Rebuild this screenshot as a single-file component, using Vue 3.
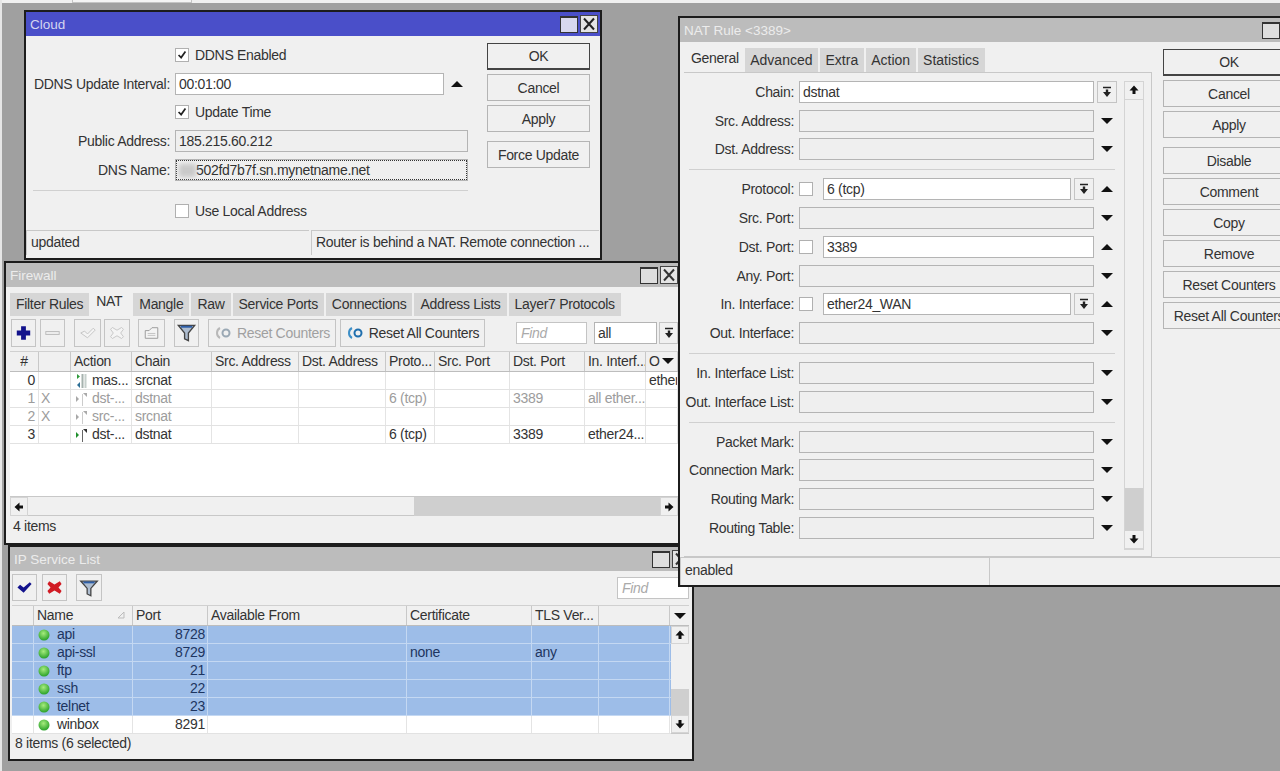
<script setup>
const cloudBtns = [
  { t: 'OK', cls: 'def' }, { t: 'Cancel' }, { t: 'Apply' }, { t: 'Force Update', cls: 'gap' }
]
const natBtns = [
  { t: 'OK', cls: 'def' }, { t: 'Cancel' }, { t: 'Apply' }, { t: 'Disable', cls: 'gap' },
  { t: 'Comment' }, { t: 'Copy' }, { t: 'Remove' }, { t: 'Reset Counters' }, { t: 'Reset All Counters' }
]
const fwTabs = ['Filter Rules', 'NAT', 'Mangle', 'Raw', 'Service Ports', 'Connections', 'Address Lists', 'Layer7 Protocols']
const natTabs = ['General', 'Advanced', 'Extra', 'Action', 'Statistics']
const natRows = [
  { l: 'Chain:', v: 'dstnat', on: true, drop: true, caret: 'none' },
  { l: 'Src. Address:' }, { l: 'Dst. Address:' }, { sep: 1 },
  { l: 'Protocol:', v: '6 (tcp)', on: true, chk: true, drop: true, caret: 'up' },
  { l: 'Src. Port:' },
  { l: 'Dst. Port:', v: '3389', on: true, chk: true, caret: 'up' },
  { l: 'Any. Port:' },
  { l: 'In. Interface:', v: 'ether24_WAN', on: true, chk: true, drop: true, caret: 'up' },
  { l: 'Out. Interface:' }, { sep: 2 },
  { l: 'In. Interface List:' }, { l: 'Out. Interface List:' }, { sep: 3 },
  { l: 'Packet Mark:' }, { l: 'Connection Mark:' }, { l: 'Routing Mark:' }, { l: 'Routing Table:' }
]
const fwHead = ['#', '', 'Action', 'Chain', 'Src. Address', 'Dst. Address', 'Proto...', 'Src. Port', 'Dst. Port', 'In. Interf...', 'O']
const fwRows = [
  { n: '0', x: '', ic: 'mas', a: 'mas...', ch: 'srcnat', p: '', d: '', i: '', o: 'ether' },
  { n: '1', x: 'X', ic: 'nat', a: 'dst-...', ch: 'dstnat', p: '6 (tcp)', d: '3389', i: 'all ether...', o: '', off: true },
  { n: '2', x: 'X', ic: 'nat', a: 'src-...', ch: 'srcnat', p: '', d: '', i: '', o: '', off: true },
  { n: '3', x: '', ic: 'nat', a: 'dst-...', ch: 'dstnat', p: '6 (tcp)', d: '3389', i: 'ether24...', o: '' }
]
const ipHead = ['', 'Name', 'Port', 'Available From', 'Certificate', 'TLS Ver...', '']
const ipRows = [
  { n: 'api', p: '8728', s: true }, { n: 'api-ssl', p: '8729', c: 'none', t: 'any', s: true },
  { n: 'ftp', p: '21', s: true }, { n: 'ssh', p: '22', s: true }, { n: 'telnet', p: '23', s: true },
  { n: 'winbox', p: '8291' }
]
</script>

<template>
  <div class="desktop">
    <div class="top-strip"><span class="top-box"></span></div>
    <div class="left-strip"></div>

    <!-- Cloud -->
    <section class="win cloud">
      <header class="title active">
        <span>Cloud</span>
        <span class="tbtns">
          <span class="tb-max"></span>
          <svg class="tb-x" viewBox="0 0 18 18"><path d="M4 3.500 14 14.500M14 3.500 4 14.500" stroke="#222" stroke-width="2" fill="none" /></svg>
        </span>
      </header>
      <div class="cloud-body">
        <div class="cloud-form">
          <div class="crow"><span class="flabel"></span><span class="check on"><svg viewBox="0 0 14 14"><path d="M3 7l3 3 5-7" stroke="#222" stroke-width="2" fill="none" /></svg></span><span class="clabel">DDNS Enabled</span></div>
          <div class="crow"><span class="flabel">DDNS Update Interval:</span><span class="field on w-interval">00:01:00</span><span class="caret-cell"><i class="caret up"></i></span></div>
          <div class="crow"><span class="flabel"></span><span class="check on"><svg viewBox="0 0 14 14"><path d="M3 7l3 3 5-7" stroke="#222" stroke-width="2" fill="none" /></svg></span><span class="clabel">Update Time</span></div>
          <div class="crow"><span class="flabel">Public Address:</span><span class="field w-wide">185.215.60.212</span></div>
          <div class="crow"><span class="flabel">DNS Name:</span><span class="field w-wide focus"><span class="smudge"></span>502fd7b7f.sn.mynetname.net</span></div>
          <div class="csep"></div>
          <div class="crow"><span class="flabel"></span><span class="check"></span><span class="clabel">Use Local Address</span></div>
        </div>
        <div class="cloud-btns">
          <button v-for="b in cloudBtns" :key="b.t" class="btn" :class="b.cls">{{ b.t }}</button>
        </div>
      </div>
      <footer class="status">
        <span class="scell c1">updated</span>
        <span class="scell c2">Router is behind a NAT. Remote connection ...</span>
      </footer>
    </section>

    <!-- Firewall -->
    <section class="win firewall">
      <header class="title">
        <span>Firewall</span>
        <span class="tbtns">
          <span class="tb-max"></span>
          <svg class="tb-x" viewBox="0 0 18 18"><path d="M4 3.500 14 14.500M14 3.500 4 14.500" stroke="#333" stroke-width="2" fill="none" /></svg>
        </span>
      </header>
      <nav class="tabs fw-tabs">
        <span v-for="t in fwTabs" :key="t" class="tab" :class="{ cur: t === 'NAT' }">{{ t }}</span>
      </nav>
      <div class="toolbar fw-bar">
        <span class="tool t-plus"><svg viewBox="0 0 24 26"><path d="M9.500 6h5v4.500H19v5h-4.500V20h-5v-4.500H5v-5h4.500z" fill="#12128c" /></svg></span>
        <span class="tool t-minus"><svg viewBox="0 0 24 26"><rect x="5" y="11.500" width="14" height="3" fill="#eee" stroke="#bbb" /></svg></span>
        <span class="tool t-check"><svg viewBox="0 0 26 26"><path d="M6 13l4-2 3 3 6-6 2 2-8 8z" fill="#f4f4f4" stroke="#c4c4c4" /></svg></span>
        <span class="tool t-x"><svg viewBox="0 0 26 26"><path d="M8 7l5 3 5-3 2 2-3 4 3 4-2 2-5-3-5 3-2-2 3-4-3-4z" fill="#f4f4f4" stroke="#c4c4c4" /></svg></span>
        <span class="tool t-note"><svg viewBox="0 0 26 26"><path d="M6.500 10.500h4l3-3h6v11h-13z" fill="#f4f4f4" stroke="#9a9a9a" /><path d="M9 13.500h8M9 15.500h8" stroke="#c4c4c4" /></svg></span>
        <span class="tool t-filter"><svg viewBox="0 0 24 26"><path d="M3.500 5h17l-6.500 8v8l-4-2v-6z" fill="#aebdd0" stroke="#444" stroke-width="1.400" /><path d="M6 6.500h12" stroke="#2f5fa8" stroke-width="2" /></svg></span>
        <span class="tool wide t-reset dim">
          <svg viewBox="0 0 20 14"><path d="M6 2C2 4 2 10 6 12" stroke="#b8b8b8" stroke-width="2" fill="none" /><circle cx="12" cy="7" r="3.500" fill="none" stroke="#9aa8b4" stroke-width="2" /></svg>
          Reset Counters
        </span>
        <span class="tool wide t-resetall">
          <svg viewBox="0 0 20 14"><path d="M6 2C2 4 2 10 6 12" stroke="#3d8fc7" stroke-width="2" fill="none" /><circle cx="12" cy="7" r="3.500" fill="none" stroke="#1f6fae" stroke-width="2" /></svg>
          Reset All Counters
        </span>
        <span class="find fw-find">Find</span>
        <span class="field on fw-all">all</span>
        <span class="dropbtn fw-drop"><svg viewBox="0 0 12 12"><path d="M2 1.500h8" stroke="#222" stroke-width="1.500" /><path d="M4.800 3.500h2.400v2.500H10L6 11 2 6h2.800z" fill="#222" /></svg></span>
      </div>
      <div class="grid-wrap fw-grid">
        <div class="grow head fw-cols">
          <span v-for="(h, i) in fwHead" :key="i" class="cell" :class="{ ctr: i === 0 }">{{ h }}</span>
          <i class="caret down head-caret"></i>
        </div>
        <div v-for="r in fwRows" :key="r.n" class="grow fw-cols" :class="{ off: r.off }">
          <span class="cell num">{{ r.n }}</span>
          <span class="cell xcell">{{ r.x }}</span>
          <span class="cell act">
            <svg v-if="r.ic === 'mas'" viewBox="0 0 14 14"><path d="M3 0v5l3-2.500z" fill="#2f9a3a" /><path d="M6 8v6l-3-3z" fill="#2d6f96" /><rect x="7.500" y="0" width="2" height="14" fill="#a6b2ae" /><rect x="10.500" y="0" width="2" height="14" fill="#c6cfcc" /></svg>
            <svg v-else viewBox="0 0 14 14"><path d="M2 4v6l3-3z" :fill="r.off ? '#a8a8a8' : '#1f8f2c'" /><path d="M8.500 14V2" :stroke="r.off ? '#ccc' : '#666'" /><path d="M9 1h4v4z" :fill="r.off ? '#aaa' : '#333'" /></svg>
            {{ r.a }}
          </span>
          <span class="cell">{{ r.ch }}</span>
          <span class="cell"></span>
          <span class="cell"></span>
          <span class="cell">{{ r.p }}</span>
          <span class="cell"></span>
          <span class="cell">{{ r.d }}</span>
          <span class="cell">{{ r.i }}</span>
          <span class="cell">{{ r.o }}</span>
        </div>
        <div class="grid-fill"></div>
      </div>
      <div class="hscroll">
        <span class="sbtn"><svg viewBox="0 0 12 12"><path d="M6.500 1.500v3H10v3H6.500v3L1.500 6z" fill="#111" /></svg></span>
        <span class="hthumb"></span>
        <span class="htrack"></span>
        <span class="sbtn"><svg viewBox="0 0 12 12"><path d="M5.500 1.500v3H2v3h3.500v3l5-4.500z" fill="#111" /></svg></span>
      </div>
      <footer class="status fw-status"><span class="scell full">4 items</span></footer>
    </section>

    <!-- IP Service List -->
    <section class="win iplist">
      <header class="title">
        <span>IP Service List</span>
        <span class="tbtns">
          <span class="tb-max"></span>
          <svg class="tb-x" viewBox="0 0 18 18"><path d="M4 3.500 14 14.500M14 3.500 4 14.500" stroke="#333" stroke-width="2" fill="none" /></svg>
        </span>
      </header>
      <div class="toolbar ip-bar">
        <span class="tool t-ipc"><svg viewBox="0 0 26 26"><path d="M5 13l3-3 4 3 7-6 2 2-9 10z" fill="#12128c" /></svg></span>
        <span class="tool t-ipx"><svg viewBox="0 0 26 26"><path d="M7 6l6 3.500L19 6l2 3-3.500 4L21 17l-2 3-6-3.500L7 20l-2-3 3.500-4L5 9z" fill="#d11b24" /></svg></span>
        <span class="tool t-ipf"><svg viewBox="0 0 26 26"><path d="M4 6h18l-7 8v8l-4-2v-6z" fill="#aebdd0" stroke="#444" stroke-width="1.400" /><path d="M7 7.500h12" stroke="#2f5fa8" stroke-width="2" /></svg></span>
        <span class="find ip-find">Find</span>
      </div>
      <div class="ip-table">
        <div class="ip-main">
          <div class="grow head ip-cols">
            <span v-for="(h, i) in ipHead" :key="i" class="cell">
              {{ h }}
              <svg v-if="h === 'Name'" class="sort" viewBox="0 0 10 10"><path d="M7 2v6H1z" fill="none" stroke="#bbb" /></svg>
            </span>
          </div>
          <div v-for="r in ipRows" :key="r.n" class="grow ip-cols" :class="{ sel: r.s }">
            <span class="cell"></span>
            <span class="cell act ipname">
              <svg viewBox="0 0 12 12"><defs><radialGradient id="led" cx=".45" cy=".35" r=".7"><stop offset="0" stop-color="#a7ec7e" /><stop offset="1" stop-color="#1f9b22" /></radialGradient></defs><circle cx="6" cy="6" r="5.500" fill="url(#led)" /></svg>
              {{ r.n }}
            </span>
            <span class="cell num port">{{ r.p }}</span>
            <span class="cell"></span>
            <span class="cell">{{ r.c }}</span>
            <span class="cell">{{ r.t }}</span>
            <span class="cell"></span>
          </div>
        </div>
        <div class="ip-scroll">
          <span class="vcorner"><i class="caret down"></i></span>
          <span class="sbtn"><svg viewBox="0 0 12 12"><path d="M1.500 6.500 6 1.500l4.500 5h-3V10h-3V6.500z" fill="#111" /></svg></span>
          <span class="vtrack"></span>
          <span class="vthumb"></span>
          <span class="sbtn"><svg viewBox="0 0 12 12"><path d="M1.500 5.500 6 10.500l4.500-5h-3V2h-3v3.500z" fill="#111" /></svg></span>
        </div>
      </div>
      <footer class="status ip-status"><span class="scell full">8 items (6 selected)</span></footer>
    </section>

    <!-- NAT Rule -->
    <section class="win natrule">
      <header class="title">
        <span>NAT Rule &lt;3389&gt;</span>
        <span class="tbtns"><span class="tb-max"></span></span>
      </header>
      <div class="nat-body">
        <div class="nat-main">
          <nav class="tabs nat-tabs">
            <span v-for="t in natTabs" :key="t" class="tab" :class="{ cur: t === 'General' }">{{ t }}</span>
          </nav>
          <div class="nat-panel">
            <div class="nat-form">
              <template v-for="r in natRows" :key="r.l || r.sep">
                <div v-if="r.sep" class="nsep" :class="'s' + r.sep"></div>
                <div v-else class="nrow">
                  <span class="nlabel">{{ r.l }}</span>
                  <span v-if="r.chk" class="check"></span>
                  <span class="field grow-f" :class="{ on: r.on }">{{ r.v }}</span>
                  <span v-if="r.drop" class="dropbtn"><svg viewBox="0 0 12 12"><path d="M2 1.500h8" stroke="#222" stroke-width="1.500" /><path d="M4.800 3.500h2.400v2.500H10L6 11 2 6h2.800z" fill="#222" /></svg></span>
                  <span class="caret-cell" :class="{ none: r.caret === 'none' }"><i v-if="r.caret !== 'none'" class="caret" :class="r.caret || 'down'"></i></span>
                </div>
              </template>
            </div>
            <div class="nat-scroll">
              <span class="sbtn"><svg viewBox="0 0 12 12"><path d="M1.500 6.500 6 1.500l4.500 5h-3V10h-3V6.500z" fill="#111" /></svg></span>
              <span class="vtrack"></span>
              <span class="vthumb"></span>
              <span class="sbtn"><svg viewBox="0 0 12 12"><path d="M1.500 5.500 6 10.500l4.500-5h-3V2h-3v3.500z" fill="#111" /></svg></span>
            </div>
          </div>
        </div>
        <div class="nat-btns">
          <button v-for="b in natBtns" :key="b.t" class="btn" :class="b.cls">{{ b.t }}</button>
        </div>
      </div>
      <footer class="status nat-status">
        <span class="scell n1">enabled</span>
        <span class="scell n2"></span>
      </footer>
    </section>
  </div>
</template>

<style>
html, body { margin: 0; background: #a0a0a0; }
</style>

<style scoped>
.desktop {
  position: relative;
  width: 1280px;
  height: 771px;
  overflow: hidden;
  background: #a0a0a0;
  font-family: "Liberation Sans", Arial, sans-serif;
  font-size: 14px;
  letter-spacing: -0.3px;
  color: #333;
}
.top-strip { height: 3px; background: #f0f0f0; position: relative; }
.top-box { position: absolute; left: 72px; top: -1px; width: 118px; height: 2px; border: 1px solid #c4c4c4; background: #f4f4f4; }
.left-strip { position: absolute; left: 0; top: 0; width: 2px; height: 771px; background: #e6e6e6; }

.win {
  position: absolute;
  box-sizing: border-box;
  border: 2px solid #1c1c1c;
  background: #f0f0f0;
  display: flex;
  flex-direction: column;
}
.cloud { left: 24px; top: 10px; width: 578px; height: 250px; }
.firewall { left: 4px; top: 261px; width: 678px; height: 284px; }
.iplist { left: 8px; top: 545px; width: 686px; height: 216px; }
.natrule { left: 678px; top: 16px; width: 640px; height: 571px; }

.title {
  height: 24px;
  flex: none;
  background: #bcbcbc;
  color: #ececec;
  display: flex;
  align-items: center;
  justify-content: space-between;
  padding-left: 4px;
  font-size: 13.500px;
  letter-spacing: 0;
}
.title.active { background: #4a4fc9; color: #d5d6f0; }
.tbtns { display: flex; gap: 2px; margin-right: 2px; align-items: center; }
.tb-max { width: 16px; height: 14px; border: 1px solid #333; border-top-width: 2px; box-sizing: content-box; background: #dedede; }
.active .tb-max { background: #d7d7ee; }
.tb-x { width: 18px; height: 18px; background: #e4e4e4; outline: 1px solid #444; outline-offset: -1px; }
.natrule .tbtns { margin-right: 36px; }

.flabel { width: 144px; text-align: right; margin-right: 5px; white-space: nowrap; flex: none; }
.field {
  box-sizing: border-box;
  height: 22px;
  border: 1px solid #b4b4b4;
  background: #efefef;
  padding-left: 3px;
  line-height: 20px;
  white-space: nowrap;
  overflow: hidden;
  display: block;
  position: relative;
}
.field.on { background: #fff; }
.check {
  flex: none;
  box-sizing: border-box;
  width: 14px;
  height: 14px;
  border: 1px solid #b0b0b0;
  background: #fff;
  display: block;
}
.check svg { display: block; width: 12px; height: 12px; }
.clabel { margin-left: 6px; }

.cloud-body { display: flex; height: 193px; flex: none; }
.cloud-form { width: 461px; padding-top: 4.500px; flex: none; }
.crow { display: flex; align-items: center; height: 28.800px; }
.w-interval { width: 269px; }
.w-wide { width: 293px; }
.focus { outline: 1px dotted #333; outline-offset: -2px; }
.smudge { display: inline-block; width: 17px; height: 13px; background: #c9c9c9; filter: blur(2px); vertical-align: -2px; }
.csep { height: 12px; margin: 0 0 0 7px; width: 435px; position: relative; }
.csep::after, .nsep::after { content: ""; position: absolute; left: 0; right: 0; top: 50%; border-top: 1px solid #d0d0d0; }
.caret-cell { flex: none; width: 26px; display: flex; justify-content: center; align-items: center; }
.caret-cell.none { width: 3px; }
.caret { display: block; width: 0; height: 0; border-left: 6px solid transparent; border-right: 6px solid transparent; }
.caret.up { border-bottom: 6px solid #111; }
.caret.down { border-top: 6px solid #111; }

.cloud-btns { padding: 7px 0 0; width: 103px; flex: none; }
.btn {
  display: block;
  box-sizing: border-box;
  width: 100%;
  height: 27px;
  margin-bottom: 4px;
  border: 1px solid #b4b4b4;
  background: #f0f0f0;
  font: inherit;
  letter-spacing: inherit;
  color: #333;
  padding: 0;
  white-space: nowrap;
  overflow: hidden;
}
.btn.def { border-color: #444; border-bottom-width: 2px; }
.btn.gap { margin-top: 9px; }

.status { flex: none; display: flex; height: 26px; padding: 0 3px 0 0; box-sizing: border-box; }
.scell {
  box-sizing: border-box;
  border-top: 1px solid #c8c8c8;
  border-left: 1px solid #c8c8c8;
  padding-left: 4px;
  line-height: 23px;
  white-space: nowrap;
  overflow: hidden;
  flex: none;
}
.c1 { width: 283px; margin-right: 2px; }
.c2 { width: 288px; }
.cloud .status { height: 25px; margin-top: 1px; }

.tabs { display: flex; gap: 2px; height: 25px; flex: none; align-items: flex-end; }
.tab {
  height: 23px;
  line-height: 22px;
  background: #d6d6d6;
  white-space: nowrap;
}
.tab.cur { height: 25px; line-height: 20px; background: #f0f0f0; }
.fw-tabs { margin: 4px 0 0 4px; }
.fw-tabs .tab { padding: 0 6px; }
.fw-tabs .tab.cur { padding: 0 9px 0 5px; }

.toolbar { display: flex; height: 28px; flex: none; align-items: stretch; }
.fw-bar { margin: 3px 0 0 5px; }
.tool {
  box-sizing: border-box;
  border: 1px solid #c4c4c4;
  background: #f0f0f0;
  display: flex;
  align-items: center;
  justify-content: center;
  flex: none;
  margin-right: 4px;
}
.tool svg { display: block; width: 100%; height: 100%; }
.tool.wide { gap: 3px; white-space: nowrap; }
.tool.wide svg { width: 20px; height: 14px; flex: none; }
.t-plus { width: 25px; }
.t-minus { width: 25px; margin-right: 9px; }
.t-check { width: 27px; margin-right: 3px; }
.t-x { width: 26px; margin-right: 8px; }
.t-note { width: 27px; margin-right: 9px; }
.t-filter { width: 25px; margin-right: 9px; }
.t-reset { width: 128px; }
.t-resetall { width: 145px; margin-right: 31px; }
.dim { color: #a0a0a0; }
.find {
  box-sizing: border-box;
  height: 22px;
  border: 1px solid #c4c4c4;
  background: #fff;
  color: #aaa;
  font-style: italic;
  padding-left: 4px;
  line-height: 20px;
  flex: none;
  align-self: center;
}
.fw-find { width: 71px; margin-right: 7px; }
.fw-all { width: 63px; align-self: center; margin-right: 2px; flex: none; }
.dropbtn {
  box-sizing: border-box;
  flex: none;
  width: 20px;
  height: 22px;
  margin-left: 3px;
  border: 1px solid #c4c4c4;
  background: #f0f0f0;
  display: flex;
  align-items: center;
  justify-content: center;
}
.dropbtn svg { width: 12px; height: 12px; }
.fw-drop { align-self: center; width: 19px; margin-left: 0; }

.grid-wrap { flex: none; margin: 4px 0 0 4px; background: #fff; }
.fw-grid { width: 668px; height: 145px; display: flex; flex-direction: column; border-bottom: 1px solid #c8c8c8; }
.grid-fill { flex: 1; }
.grow { display: grid; height: 18px; flex: none; background: #fff; position: relative; box-sizing: border-box; border-bottom: 1px solid #e2e2e2; line-height: 17px; }
.fw-cols { grid-template-columns: 29px 32px 61px 80px 87px 87px 49px 75px 75px 61px 32px; }
.ip-cols { grid-template-columns: 22px 99px 75px 199px 125px 67px 71px; }
.grow.head { height: 21px; background: #f0f0f0; border-bottom: 1px solid #bdbdbd; border-top: 1px solid #d0d0d0; line-height: 19px; }
.cell {
  box-sizing: border-box;
  border-right: 1px solid #e4e4e4;
  padding-left: 3px;
  overflow: hidden;
  white-space: nowrap;
  min-width: 0;
}
.head .cell { border-right-color: #c8c8c8; }
.cell.num { text-align: right; padding: 0 3px 0 0; }
.cell.port { padding-right: 2px; }
.cell.ctr { text-align: center; padding: 0; }
.xcell { padding-left: 2px; }
.off { color: #9c9c9c; }
.act { display: flex; align-items: center; gap: 4px; }
.act svg { width: 14px; height: 14px; flex: none; }
.head-caret { position: absolute; right: 4px; top: 6px; }

.hscroll { display: flex; height: 19px; flex: none; margin-left: 4px; width: 668px; background: #f0f0f0; }
.sbtn { flex: none; height: 18px; box-sizing: border-box; border: 1px solid #d4d4d4; background: #f0f0f0; display: flex; align-items: center; justify-content: center; }
.sbtn svg { width: 12px; height: 12px; }
.hscroll .sbtn { width: 18px; height: 19px; }
.hthumb { width: 386px; background: #f0f0f0; border-bottom: 1px solid #c8c8c8; box-sizing: border-box; }
.htrack { flex: 1; background: #cfcfcf; }
.fw-status { height: 26px; }
.full { width: 100%; border: 0; padding-left: 7px; line-height: 20px; }

.ip-bar { margin: 3px 0 0 2px; height: 27px; }
.t-ipc { width: 25px; margin-right: 5px; }
.t-ipx { width: 25px; margin-right: 9px; }
.t-ipf { width: 26px; margin-right: 515px; }
.ip-find { width: 72px; }
.ip-table { display: flex; margin: 4px 0 0 2px; flex: none; height: 128px; width: 677px; border-bottom: 1px solid #c8c8c8; box-sizing: content-box; background: #fff; }
.ip-main { flex: 1; }
.ip-scroll { flex: none; width: 18px; display: flex; flex-direction: column; background: #f0f0f0; }
.vcorner { height: 21px; flex: none; display: flex; align-items: center; justify-content: center; box-sizing: border-box; border-top: 1px solid #d0d0d0; border-bottom: 1px solid #bdbdbd; }
.ip-scroll .sbtn { height: 18px; }
.vtrack { flex: 1; background: #f0f0f0; }
.vthumb { background: #cfcfcf; flex: none; }
.ip-scroll .vthumb { height: 26px; }
.sel { background: #9dbde8; border-bottom-color: #c4d8f2; color: #1d3560; }
.sel .cell { border-right-color: #c4d8f2; }
.ipname { gap: 7px; padding-left: 4px; }
.ipname svg { width: 12px; height: 12px; }
.sort { width: 10px; height: 10px; float: right; margin: 4px 5px 0 0; }
.ip-status { height: 22px; }
.ip-status .full { padding-left: 5px; line-height: 19px; }

.nat-body { display: flex; height: 515px; flex: none; }
.nat-main { width: 468px; margin: 4px 0 0 4px; flex: none; display: flex; flex-direction: column; }
.nat-tabs { height: 26px; letter-spacing: 0; }
.nat-tabs .tab { height: 24px; line-height: 24px; padding: 0 5.500px; }
.nat-tabs .tab.cur { height: 26px; line-height: 24px; padding: 0 4px 0 7px; letter-spacing: -0.3px; }
.nat-panel {
  box-sizing: border-box;
  height: 485px;
  border-top: 1px solid #c8c8c8;
  border-right: 1px solid #c8c8c8;
  border-bottom: 1px solid #c8c8c8;
  display: flex;
  padding-top: 4.500px;
}
.nat-form { width: 436px; flex: none; }
.nrow { display: flex; align-items: center; height: 28.800px; }
.nlabel { flex: none; width: 110px; margin-right: 5px; text-align: right; white-space: nowrap; }
.nrow .check { margin-right: 10px; }
.grow-f { flex: 1; min-width: 0; }
.nsep { position: relative; height: 11px; margin-left: 5px; margin-right: 5px; }
.nat-scroll { width: 20px; margin: 3px 0 0 4px; height: 469px; display: flex; flex-direction: column; border: 1px solid #d4d4d4; box-sizing: border-box; }
.nat-scroll .sbtn { height: 18px; border: 0; border-bottom: 1px solid #d4d4d4; }
.nat-scroll .vthumb { height: 43px; }
.nat-btns { width: 132px; margin: 7px 0 0 11px; flex: none; }
.nat-status { height: 28px; }
.nat-status .scell { line-height: 25px; }
.n1 { width: 309px; margin-left: 0; }
.n2 { flex: 1; }
</style>
